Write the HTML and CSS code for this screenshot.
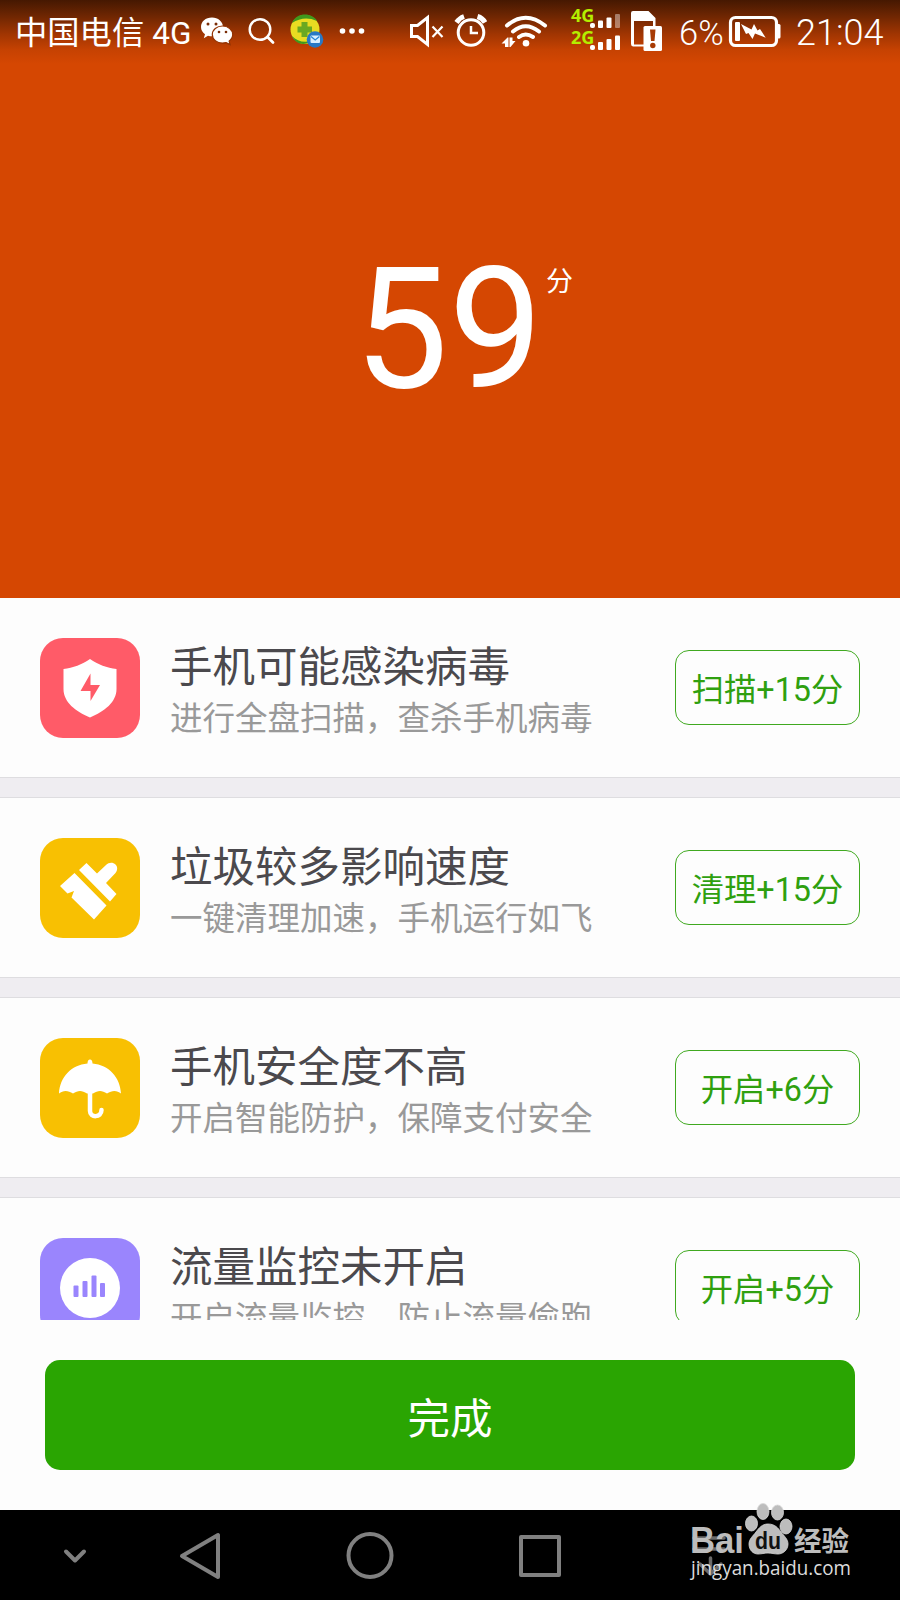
FILE: index.html
```html
<!DOCTYPE html>
<html lang="zh-CN">
  <head>
    <meta charset="UTF-8" />
    <meta name="viewport" content="width=device-width, initial-scale=1.0" />
    <title>手机体检</title>
    <link rel="stylesheet" href="styles.css">
  </head>
  <body>
    <div class="phone">
      <div class="hero">
        <div class="status">
          <div class="carrier">中国电信 <span>4G</span></div>
          <!-- wechat -->
          <svg width="44" height="64" viewBox="196 0 44 64">
            <path fill="#fff" d="M212 17.500c-6.500 0-11 4-11 9.500 0 3 1.500 5.500 4 7.200l-1.200 4 4.200-2.500c1.300.4 2.700.6 4 .6 6 0 11-4 11-9.300s-5-9.500-11-9.500z" />
            <path fill="#fff" stroke="#933202" stroke-width="1.200" d="M222.500 26c-5.700 0-10.200 3.700-10.200 8.500s4.500 8.600 10.200 8.600c1.300 0 2.500-.2 3.600-.5l4 2-1-3.500c2.200-1.700 3.600-4 3.600-6.600 0-4.800-4.500-8.500-10.200-8.500z" />
            <g fill="#7a2c06">
              <circle cx="208" cy="24" r="1.500" /><circle cx="216" cy="24" r="1.500" />
              <circle cx="219" cy="32" r="1.300" /><circle cx="226" cy="32" r="1.300" />
            </g>
          </svg>
          <!-- search -->
          <svg width="42" height="64" viewBox="240 0 42 64" fill="none" stroke="#fff" stroke-width="2.400">
            <circle cx="260" cy="29.500" r="10.300" />
            <path stroke-linecap="round" stroke-width="2.800" d="M267.500 37l5.500 5.500" />
          </svg>
          <!-- 360 -->
          <svg width="48" height="64" viewBox="282 0 48 64">
            <circle cx="305" cy="29.500" r="14.500" fill="#e9dc22" />
            <path fill="#3f981d" d="M292 23c2-6 8-8.500 13-8.500 5 0 10 2.500 12 6.500-9-4-17-3-25 2z" />
            <path fill="#3f981d" d="M292 36c5 5 11 7 19 5-6 5-15 4-19-5z" />
            <path fill="#6aa821" d="M301.500 22h6v4.500h4.500v6h-4.500v4.500h-6v-4.500h-4v-6h4z" />
            <circle cx="315" cy="39.500" r="8.300" fill="#2878c4" />
            <rect x="310.500" y="35.500" width="9.500" height="7.500" rx="1" fill="#d9efff" />
            <path fill="none" stroke="#2886d4" stroke-width="1.300" d="M311 36.500l4.200 3.500 4.200-3.500" />
          </svg>
          <svg class="more" width="46" height="64" viewBox="330 0 46 64" fill="#fff">
            <circle cx="342.500" cy="31" r="2.800" /><circle cx="352" cy="31" r="2.800" /><circle cx="361.500" cy="31" r="2.800" />
          </svg>
          <!-- mute -->
          <svg width="49" height="64" viewBox="400 0 49 64" fill="none" stroke="#fff" stroke-width="3">
            <path d="M411.500 25.500h6l10-8v27l-10-8h-6z" />
            <path stroke-width="2.200" d="M432.500 26.500l10 10.500M442.500 26.500l-10 10.500" />
          </svg>
          <!-- alarm -->
          <svg width="46" height="64" viewBox="449 0 46 64" fill="none" stroke="#fff">
            <circle cx="471" cy="32.500" r="12.800" stroke-width="3" />
            <path stroke-width="2.500" d="M471 26v7h7" />
            <path stroke-width="5" d="M456.500 22.500q3-4.500 7.500-6M477.500 16.500q5 1.500 7.500 6" />
          </svg>
          <!-- wifi -->
          <svg width="64" height="64" viewBox="495 0 64 64" fill="none" stroke="#fff" stroke-width="4" stroke-linecap="round">
            <path d="M507 25.500q18.500-15.500 38 0M513 31.500q12.500-10.500 26 0M519 37q6.500-5 14 0" />
            <circle cx="526" cy="43.300" r="3.300" fill="#fff" stroke="none" />
            <path fill="#fff" stroke="none" d="M501.500 43.500l6-6h1v9.500h-3.500v-3.500zM515.500 41l-5 6h-1v-9.500h3v3.500z" />
          </svg>
          <!-- signals of the two sims -->
          <svg width="67" height="64" viewBox="559 0 67 64">
            <g class="net" fill="#b4ee00">
              <text x="571" y="22">4G</text>
              <text x="571" y="43.500">2G</text>
            </g>
            <g fill="#fff">
              <rect x="590" y="23" width="5" height="5" rx="2" />
              <rect x="598" y="20.500" width="5" height="7.500" rx="1" />
              <rect x="606.500" y="17.500" width="5" height="10.500" rx="1" />
              <rect x="615" y="14" width="5" height="14" rx="1" opacity=".4" />
              <rect x="590" y="45" width="5" height="5" rx="2" />
              <rect x="598" y="42" width="5" height="8" rx="1" />
              <rect x="606.500" y="39" width="5" height="11" rx="1" />
              <rect x="615" y="35.500" width="5" height="14.500" rx="1" />
            </g>
          </svg>
          <!-- sim card -->
          <svg width="46" height="64" viewBox="626 0 46 64">
            <path fill="#fff" d="M633 11h15.500l7 7v9h-2.500v-6h-19v23.500h10v2h-11q-2-.5-2-2.500v-31q0-2 2-2z" />
            <rect x="643.500" y="26" width="18.500" height="25" rx="1.500" fill="#fff" />
            <path fill="#a83b04" d="M650 29.500h5.500l-1 11.500h-3.500z" />
            <circle cx="652.800" cy="45.500" r="2.700" fill="#a83b04" />
          </svg>
          <div class="percent">6%</div>
          <!-- battery -->
          <svg width="60" height="64" viewBox="726 0 60 64">
            <rect x="730.500" y="17.500" width="46" height="28" rx="5" fill="none" stroke="#fff" stroke-width="3.200" />
            <path fill="#fff" d="M777 24h2q1.500 0 1.500 1.500v11.500q0 1.500-1.500 1.500h-2z" />
            <rect x="735" y="22" width="5" height="19" rx="1" fill="#fff" />
            <path fill="#fff" d="M741 24L751.500 29.500 754 24 757.500 30.500 760 29 765.700 37.700 755 33.500 752.500 39 748.500 33 746 34z" />
          </svg>
          <div class="time">21:04</div>
        </div>
        <div class="score">
          <span class="num">59</span>
          <span class="unit">分</span>
        </div>
      </div>

      <div class="list">
        <div class="item">
          <div class="icon red">
            <svg width="100" height="100" viewBox="0 0 100 100">
              <path fill="#fff" d="M50 21c8 5.500 17 9 26.500 10v20c0 13-12 22.500-26.500 28.500C35.500 73.500 23.500 64 23.500 51V31C33 30 42 26.500 50 21z" />
              <path fill="#ff5b68" d="M50.500 35.500v11.500h9.500L50.500 63V53H40.500z" />
            </svg>
          </div>
          <div class="text">
            <div class="title">手机可能感染病毒</div>
            <div class="desc">进行全盘扫描，查杀手机病毒</div>
          </div>
          <div class="btn">扫描+15分</div>
        </div>
        <div class="item">
          <div class="icon yellow">
            <svg width="100" height="100" viewBox="0 0 100 100" fill="#fff">
              <path d="M34.500 35L66.500 67.500 54 81.500 31.500 59.500 34 53 27.500 55.500 20 48z" />
              <path d="M46.500 25L57 35.500 66 27c3-3 7-3 9.500-.5s2 6 0 8.500L66 45 76.500 56 70 63.500 39 32z" />
            </svg>
          </div>
          <div class="text">
            <div class="title">垃圾较多影响速度</div>
            <div class="desc">一键清理加速，手机运行如飞</div>
          </div>
          <div class="btn">清理+15分</div>
        </div>
        <div class="item">
          <div class="icon yellow">
            <svg width="100" height="100" viewBox="0 0 100 100">
              <path fill="#fff" d="M50 21.500c1.500 0 2.500 1.300 2.500 4C69 27 80 39 81 55.500c-4-3.500-9-3.500-14 0-5-3.500-9-3.500-14 0h-6c-5-3.500-9-3.500-14 0-5-3.500-10-3.500-14 0C20 39 31 27 47.500 25.500c0-2.700 1-4 2.500-4z" />
              <path fill="none" stroke="#fff" stroke-width="4.500" stroke-linecap="round" d="M50 53v20c0 7 11.500 7 11.500-1" />
            </svg>
          </div>
          <div class="text">
            <div class="title">手机安全度不高</div>
            <div class="desc">开启智能防护，保障支付安全</div>
          </div>
          <div class="btn">开启+6分</div>
        </div>
        <div class="item">
          <div class="icon purple">
            <svg width="100" height="100" viewBox="0 0 100 100">
              <circle cx="50" cy="50" r="30" fill="#fff" />
              <g fill="#9a85fd">
                <rect x="33.500" y="47.500" width="5" height="11.500" rx="1" />
                <rect x="42.500" y="43" width="5" height="16" rx="1" />
                <rect x="51.500" y="37.500" width="5" height="21.500" rx="1" />
                <rect x="60" y="45" width="5" height="14" rx="1" />
              </g>
            </svg>
          </div>
          <div class="text">
            <div class="title">流量监控未开启</div>
            <div class="desc">开启流量监控，防止流量偷跑</div>
          </div>
          <div class="btn">开启+5分</div>
        </div>
      </div>

      <div class="footer">
        <div class="done">完成</div>
      </div>

      <div class="nav">
        <svg width="900" height="90" viewBox="0 0 900 90" fill="none" stroke="#808080" stroke-width="4" stroke-linejoin="round" stroke-linecap="round">
          <path d="M66 41.500l9 9 9-9" />
          <path d="M182 46L218 25v42z" />
          <circle cx="370" cy="45.500" r="21.500" />
          <rect x="521" y="27" width="38" height="38" />
          <path stroke="#6b6b6b" stroke-width="3.500" d="M694 28h30M694 39h30M710.500 48v16M700 54l10.500 10 10.500-10" />
        </svg>
        <div class="watermark">
          <svg width="170" height="90" viewBox="686 1500 170 90" fill="#bdbdbd">
            <text class="bai" x="690" y="1553" textLength="54" lengthAdjust="spacingAndGlyphs">Bai</text>
            <g stroke="#d8d8d8" stroke-width=".8">
              <ellipse cx="751.500" cy="1523.500" rx="6" ry="7.500" />
              <ellipse cx="763" cy="1511.500" rx="6" ry="8" />
              <ellipse cx="777.500" cy="1512.500" rx="6" ry="7.500" />
              <ellipse cx="786" cy="1526.500" rx="6" ry="7.500" />
              <path d="M768 1524c7 0 10 4 13 8s7 7 7 12c0 6-5 10-10 10-4 0-6-1-10-1s-6 1-10 1c-5 0-9-4-9-10 0-5 4-8 7-12s6-8 12-8z" />
            </g>
            <text class="du" x="755" y="1549" fill="#111" textLength="26" lengthAdjust="spacingAndGlyphs">du</text>
            <text class="jy" x="794" y="1550.500">经验</text>
            <text class="url" x="691" y="1574.500" fill="#dcdcdc" textLength="160" lengthAdjust="spacingAndGlyphs">jingyan.baidu.com</text>
          </svg>
        </div>
      </div>
    </div>
  </body>
</html>
```
FILE: styles.css
```css
body {
  margin: 0;
  padding: 0;
  background: #fdfdfd;
  font-family: Roboto, 'Noto Sans CJK SC', sans-serif;
}

.phone {
  width: 900px;
  height: 1600px;
  overflow: hidden;
  display: flex;
  flex-direction: column;
}

.phone svg {
  display: block;
  flex-shrink: 0;
}

.hero {
  height: 598px;
  background: linear-gradient(#451801 0, #6e2602 16px, #a03502 34px, #c64202 50px, #d54702 64px);
  color: #fff;
}

.status {
  display: flex;
  height: 64px;
  line-height: 66px;
  white-space: nowrap;
}

.carrier {
  box-sizing: border-box;
  width: 196px;
  padding-left: 15px;
  font-size: 32.3px;
  line-height: 67px;
}

.carrier span {
  font-size: 31.5px;
}

.more {
  margin-right: 24px;
}

.net {
  font: bold 18px 'Noto Sans', sans-serif;
}

.percent {
  width: 54px;
  text-indent: 7px;
  font-size: 34.5px;
  font-weight: 300;
}

.time {
  width: 114px;
  text-indent: 10px;
  font-size: 36px;
  font-weight: 300;
}

.score {
  display: flex;
  justify-content: center;
  align-items: flex-start;
  padding: 166px 0 0 27px;
}

.num {
  font-size: 168px;
  line-height: 200px;
}

.unit {
  margin: 32px 0 0 3px;
  font-size: 27px;
  line-height: 40px;
}

.list {
  height: 722px;
  overflow: hidden;
}

.item {
  display: flex;
  align-items: center;
  box-sizing: border-box;
  height: 179px;
  padding: 0 40px;
  margin-bottom: 21px;
  background: #fdfdfd;
  box-shadow: 0 -1px #dedde0, 0 1px #dedde0, 0 21px #efedf1;
}

.icon {
  width: 100px;
  height: 100px;
  border-radius: 23px;
}

.red {
  background: #ff5b68;
}

.yellow {
  background: #f8c002;
}

.purple {
  background: #9a85fd;
}

.text {
  flex: 1;
  margin-left: 30px;
  padding-top: 11px;
}

.title {
  font-size: 42.5px;
  line-height: 52px;
  color: #4b494d;
}

.desc {
  font-size: 32.5px;
  line-height: 50px;
  color: #999;
}

.btn {
  box-sizing: border-box;
  width: 185px;
  height: 75px;
  border: 1.5px solid #40a920;
  border-radius: 14px;
  text-align: center;
  font-size: 32.3px;
  line-height: 79px;
  color: #2fa00f;
}

.footer {
  height: 190px;
  box-sizing: border-box;
  padding: 40px 45px;
}

.done {
  height: 110px;
  border-radius: 15px;
  background: #2aa502;
  color: #fff;
  text-align: center;
  font-size: 42.5px;
  line-height: 119px;
}

.nav {
  position: relative;
  height: 90px;
  background: #000;
}

.watermark {
  position: absolute;
  left: 686px;
  top: -10px;
}

.bai {
  font: bold 36px 'Liberation Sans', sans-serif;
}

.du {
  font: bold 24px 'Liberation Sans', sans-serif;
}

.jy {
  font: bold 27.5px 'Noto Sans CJK SC', sans-serif;
}

.url {
  font: 20.5px 'Open Sans', sans-serif;
}
```
